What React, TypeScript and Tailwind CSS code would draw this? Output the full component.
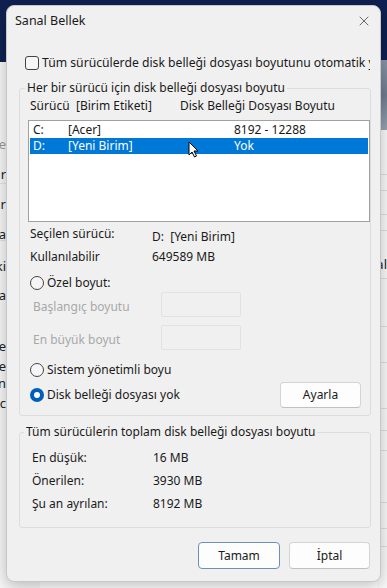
import { X } from 'lucide-react'

function Radio({ checked = false }: { checked?: boolean }) {
  return checked ? (
    <span className="w-[14px] h-[14px] rounded-full bg-[#005fb8] flex items-center justify-center shrink-0">
      <span className="w-[6px] h-[6px] rounded-full bg-white" />
    </span>
  ) : (
    <span className="w-[14px] h-[14px] rounded-full border border-[#444] bg-[#f6f6f6] shrink-0" />
  )
}

function Cursor() {
  return (
    <svg width="11" height="17" viewBox="0 0 11 17" className="absolute left-[188px] top-[141px]">
      <path d="M1 1 L1 14 L4 11 L6.5 16 L8.5 15 L6 10 L10 10 Z" fill="#fff" stroke="#000" strokeWidth="1" strokeLinejoin="round" />
    </svg>
  )
}

// underlying windows peeking out behind the dialog
function Desktop() {
  const leftBits = [
    { y: 74, t: 'Ge', c: 'text-[#9a9a9a]' },
    { y: 104, t: 'r' },
    { y: 134, t: 'ar' },
    { y: 164, t: 'ta' },
    { y: 196, t: 'ki' },
    { y: 225, t: 'ra' },
    { y: 276, t: 'le' },
    { y: 296, t: 'le' },
    { y: 313, t: 'in' },
    { y: 333, t: 'üc' },
  ]
  return (
    <div className="absolute inset-0">
      <div className="h-[62px] bg-[#0f2152]" />
      <div className="absolute left-0 top-[62px] w-[40px] bottom-0 bg-[#f7f7f7]">
        {leftBits.map(b => (
          <div key={b.y} className={`absolute right-[34px] text-[13px] leading-[16px] ${b.c ?? 'text-[#222]'}`} style={{ top: b.y }}>
            {b.t}
          </div>
        ))}
        <div className="absolute left-0 right-0 top-[121px] h-px bg-[#e2e2e2]" />
        <div className="absolute left-0 right-0 top-[178px] h-px bg-[#e2e2e2]" />
      </div>
      <div className="absolute right-0 top-[60px] w-[10px] h-[70px] bg-gradient-to-b from-[#8a97a8] via-[#6e7c8f] to-[#9aa5b2]" />
      <div className="absolute right-0 top-[130px] w-[10px] bottom-0 bg-[#fafafa]">
        {[44, 60, 84, 100, 148, 196, 232, 278, 300, 320, 372, 398, 416].map(y => (
          <div key={y} className="absolute left-0 right-0 h-px bg-[#dedede]" style={{ top: y }} />
        ))}
        <div className="absolute top-[126px] right-[0px] text-[13px] leading-[16px] text-[#222]">al</div>
      </div>
    </div>
  )
}

export default function App() {
  return (
    <div className="relative w-[387px] h-[588px] overflow-hidden font-['Segoe_UI','Noto_Sans',sans-serif] text-[12px] text-[#1a1a1a] leading-[16px]">
      <Desktop />

      {/* Dialog */}
      <div className="absolute left-[6px] top-[5px] w-[375px] h-[577px] rounded-[8px] bg-[#f0f0f0] border border-[#c8c8c8] shadow-[0_4px_16px_rgba(0,0,0,0.25)] flex flex-col overflow-hidden">
        <div className="h-[30px] flex items-center justify-between pl-[8px] pr-[8px] shrink-0">
          <span className="text-[12.5px]">Sanal Bellek</span>
          <X size={16} strokeWidth={1} className="text-[#222]" />
        </div>

        <div className="pl-[12px] pr-[10px] flex flex-col">
          <label className="mt-[17px] h-[20px] flex items-center gap-[3px] pl-[6px] whitespace-nowrap overflow-hidden">
            <span className="w-[14px] h-[14px] rounded-[3px] border border-[#444] bg-[#f6f6f6] shrink-0" />
            <span className="text-[12.2px]">Tüm sürücülerde disk belleği dosyası boyutunu otomatik yönet</span>
          </label>

          {/* Per-drive group */}
          <fieldset className="mt-[7px] w-[352px] border border-[#dcdcdc] rounded-[3px] pl-[8px] pr-0 pb-[7px]">
            <legend className="ml-[-3px] px-[2px] h-[16px]">Her bir sürücü için disk belleği dosyası boyutu</legend>

            <div className="mt-[2px] h-[16px] flex pl-[2px]">
              <span className="w-[46px]">Sürücü</span>
              <span className="w-[104px]">[Birim Etiketi]</span>
              <span>Disk Belleği Dosyası Boyutu</span>
            </div>

            <div className="mt-[6px] h-[102px] bg-white border border-[#a0a0a0] p-px">
              <div className="h-[16px] flex pl-[3px]">
                <span className="w-[35px]">C:</span>
                <span className="w-[166px]">[Acer]</span>
                <span>8192 - 12288</span>
              </div>
              <div className="h-[16px] flex pl-[3px] bg-[#0078d7] text-white">
                <span className="w-[35px]">D:</span>
                <span className="w-[166px]">[Yeni Birim]</span>
                <span>Yok</span>
              </div>
            </div>

            <div className="mt-[2px] h-[20px] flex items-center pl-[2px]">
              <span className="w-[122px]">Seçilen sürücü:</span>
              <span className="mt-[6px]">D:&nbsp; [Yeni Birim]</span>
            </div>
            <div className="mt-[3px] h-[20px] flex items-center pl-[2px]">
              <span className="w-[122px]">Kullanılabilir</span>
              <span>649589 MB</span>
            </div>

            <div className="mt-[6px] h-[19px] flex items-center gap-[3px] pl-[2px]">
              <Radio />
              <span>Özel boyut:</span>
            </div>
            <div className="h-[25px] flex items-center pl-[5px]">
              <span className="w-[128px] pt-[4px] text-[#a8a8a8]">Başlangıç boyutu</span>
              <span className="w-[80px] h-[25px] border border-[#e2e2e2] rounded-[2px] bg-[#f0f0f0]" />
            </div>
            <div className="mt-[8px] h-[25px] flex items-center pl-[5px]">
              <span className="w-[128px] pt-[4px] text-[#a8a8a8]">En büyük boyut</span>
              <span className="w-[80px] h-[25px] border border-[#e2e2e2] rounded-[2px] bg-[#f0f0f0]" />
            </div>

            <div className="mt-[10px] h-[20px] flex items-center gap-[3px] pl-[2px]">
              <Radio />
              <span>Sistem yönetimli boyu</span>
            </div>
            <div className="mt-[2px] h-[26px] flex items-center pl-[2px]">
              <Radio checked />
              <span className="ml-[3px]">Disk belleği dosyası yok</span>
              <button className="ml-auto mr-[9px] w-[81px] h-[26px] rounded-[4px] bg-[#fdfdfd] border border-[#d4d4d4] border-b-[#c0c0c0]">
                Ayarla
              </button>
            </div>
          </fieldset>

          {/* Totals group */}
          <fieldset className="mt-[8px] w-[352px] border border-[#dcdcdc] rounded-[3px] pl-[12px] pb-[12px]">
            <legend className="ml-[-8px] px-[2px] h-[16px]">Tüm sürücülerin toplam disk belleği dosyası boyutu</legend>
            <div className="mt-[6px] flex flex-col">
              {[
                ['En düşük:', '16 MB'],
                ['Önerilen:', '3930 MB'],
                ['Şu an ayrılan:', '8192 MB'],
              ].map(([k, v]) => (
                <div key={k} className="h-[23px] flex items-center">
                  <span className="w-[121px]">{k}</span>
                  <span>{v}</span>
                </div>
              ))}
            </div>
          </fieldset>

          <div className="mt-[14px] flex justify-end gap-[9px] pr-[0px]">
            <button className="w-[82px] h-[27px] rounded-[4px] bg-[#fdfdfd] border border-[#6f8fb6]">Tamam</button>
            <button className="w-[81px] h-[27px] rounded-[4px] bg-[#fdfdfd] border border-[#d4d4d4] border-b-[#c0c0c0]">İptal</button>
          </div>
        </div>
      </div>

      <Cursor />
    </div>
  )
}
